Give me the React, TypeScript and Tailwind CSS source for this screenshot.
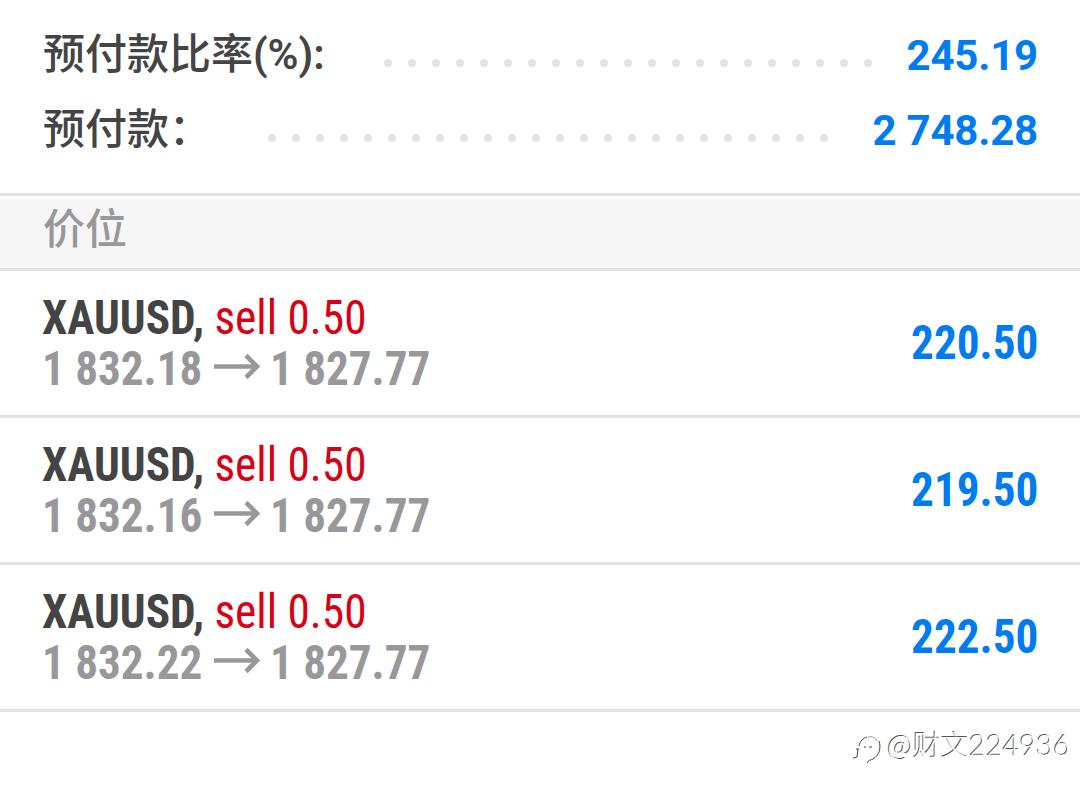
const rows = [
  { open: '1 832.18', current: '1 827.77', profit: '220.50' },
  { open: '1 832.16', current: '1 827.77', profit: '219.50' },
  { open: '1 832.22', current: '1 827.77', profit: '222.50' },
];

const summary = [
  { label: '预付款比率', suffix: '(%):', value: '245.19', dots: 21, inset: 'mr-[35px]' },
  { label: '预付款：', suffix: '', value: '2 748.28', dots: 24, inset: 'mr-[44px]' },
];

function Dots({ count }: { count: number }) {
  return (
    <div className="flex gap-4 pt-[15px]">
      {Array.from({ length: count }, (_, i) => (
        <span key={i} className="size-2 rounded-full bg-[#e2e2e2]" />
      ))}
    </div>
  );
}

function Arrow() {
  return (
    <svg className="h-[51px] w-[46px]" viewBox="0 0 46 51" fill="none" stroke="#98989b" strokeWidth="4.6">
      <path d="M0 23.5H43" />
      <path d="M32 12.500L43 23.500L32 34.500" />
    </svg>
  );
}

export default function App() {
  return (
    <div className="h-[792px] w-[1080px] overflow-hidden bg-white font-['Roboto','Noto_Sans_CJK_SC',sans-serif]">
      <section className="flex h-[193px] flex-col pt-[18px] pr-[42px] pl-[43px]">
        {summary.map((s) => (
          <div key={s.label} className="flex h-[75px] items-center text-[42px] leading-[75px]">
            <span className="-mt-[2px] font-medium text-[#444]">
              {s.label}
              <span className="font-semibold">{s.suffix}</span>
            </span>
            <div className={`ml-auto ${s.inset}`}>
              <Dots count={s.dots} />
            </div>
            <span className="font-bold tracking-[-0.2px] text-[#007cf0]">{s.value}</span>
          </div>
        ))}
      </section>
      <div className="h-[78px] border-y-[3px] border-[#e2e2e2]">
        <h2 className="h-full border-t-[3px] border-white bg-[#f6f6f6] px-[43px] text-[42px] leading-[61px] font-medium text-[#98989b]">价位</h2>
      </div>
      {rows.map((r) => (
        <div key={r.open} className="flex h-[147px] items-center justify-between border-b-[3px] border-[#e2e2e2] pr-[42px] pl-[42px] text-[48px] [font-stretch:75%]">
          <div className="leading-[51px]">
            <div className="origin-left scale-x-[0.943] font-bold whitespace-nowrap text-[#444]">
              XAUUSD, <span className="text-[#d90016] [font-weight:450]">sell 0.50</span>
            </div>
            <div className="flex font-bold text-[#98989b]">
              <span className="w-[172px] origin-left scale-x-[0.94] whitespace-nowrap">{r.open}</span>
              <Arrow />
              <span className="ml-[10px] origin-left scale-x-[0.94] whitespace-nowrap">{r.current}</span>
            </div>
          </div>
          <span className="origin-right scale-x-[0.94] font-bold text-[#007cf0]">{r.profit}</span>
        </div>
      ))}
      <footer className="flex h-[64px] items-center justify-end pr-[10px] whitespace-nowrap">
        <svg className="mt-[5px] mr-[5px] h-[36px] w-[30px]" viewBox="0 0 30 36" fill="none" stroke="#444" strokeWidth="1">
          <path d="M0 29l4-1M4 28l1-8M3 20h3M6 17c1-5 4-8 8-9" />
          <path d="M15 8c5-1 7 1 9 4" stroke="#999" />
          <path d="M26 12c2 6 1 14-6 18-2 1-5 1-6 4M11 18h2M16 18h3" />
        </svg>
        <span className="font-['Lato','Noto_Sans_CJK_SC',sans-serif] text-[28px] leading-[40px] font-light text-white [text-shadow:-1px_-1px_0.5px_#555]">
          <span className="font-['Noto_Sans_CJK_SC',sans-serif]">@</span>财文<span className="text-[29px]">224936</span>
        </span>
      </footer>
    </div>
  );
}
